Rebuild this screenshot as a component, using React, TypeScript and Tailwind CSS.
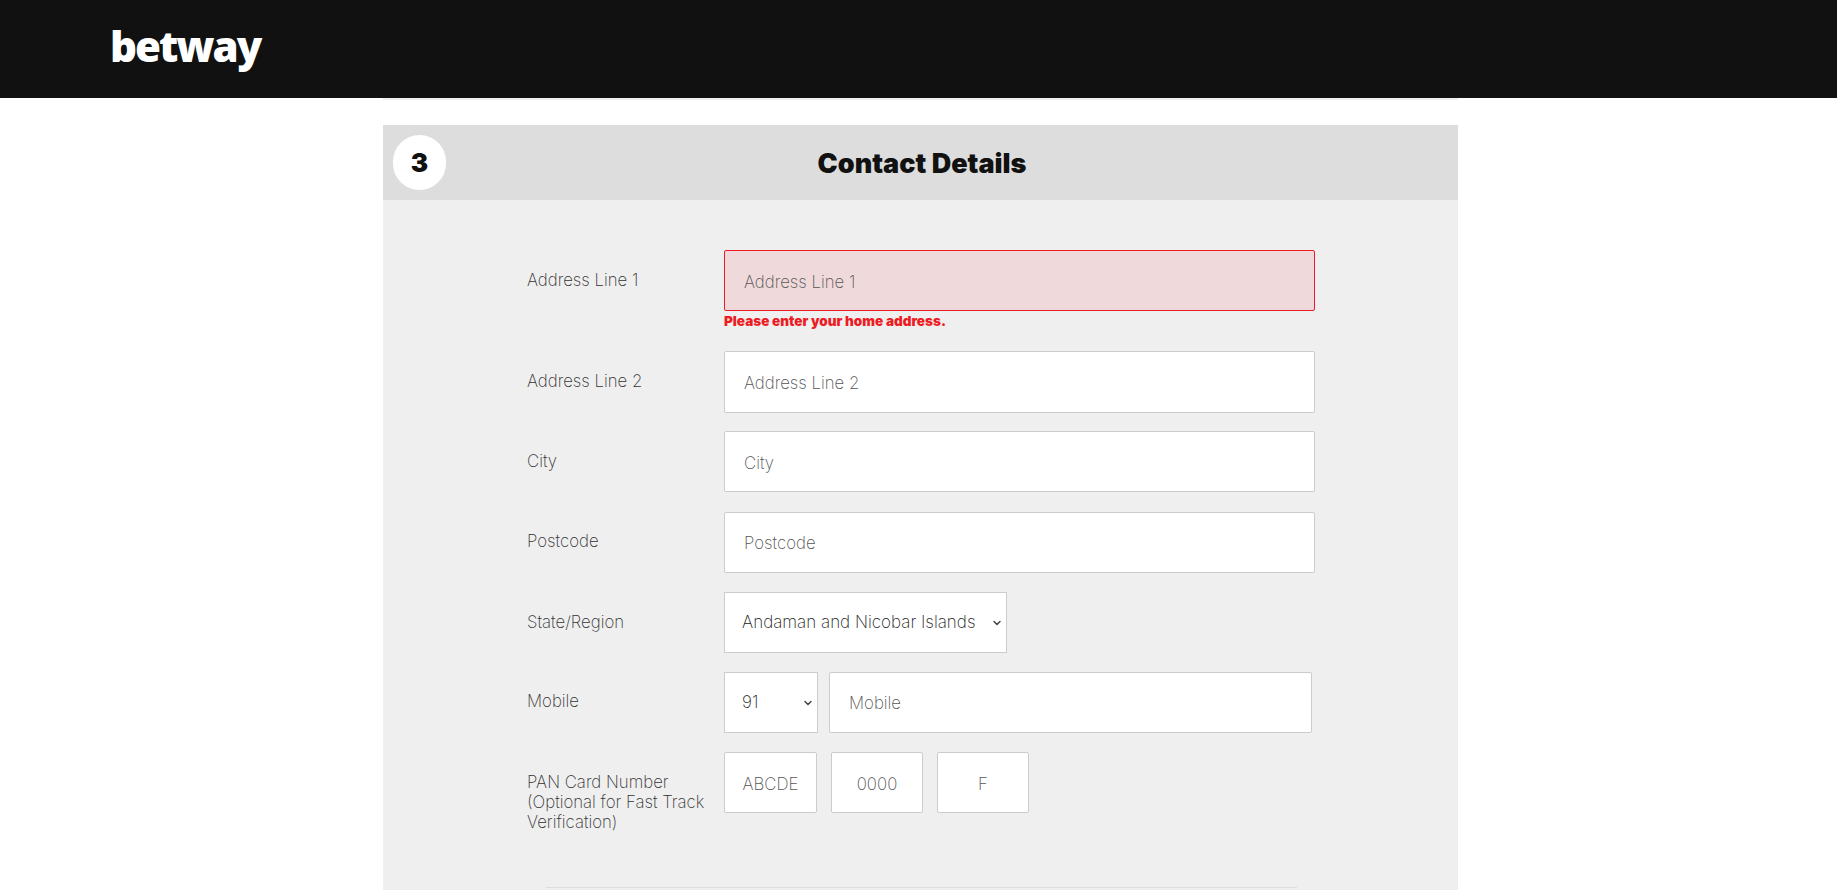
import React from 'react';
import { ChevronDown } from 'lucide-react';

const labelCls = "w-[197px] shrink-0 text-[16.8px] leading-[20px] font-[250] text-[#333]";
const inputCls = "h-[61px] bg-white border border-[#ccc] rounded-[2px] px-[19px] pt-[2px] text-[16.8px] font-[250] text-[#333] placeholder:text-[#555] outline-none";

function Row({ label, children, className, labelTop }: { label: string; children: React.ReactNode; className?: string; labelTop?: string }) {
  return (
    <div className={"flex " + (className || "")}>
      <div className={labelCls + " " + (labelTop || "pt-[20px]")}>{label}</div>
      {children}
    </div>
  );
}

function SelectBox({ value, width }: { value: string; width: string }) {
  return (
    <div className={"relative flex h-[61px] shrink-0 items-center border border-[#ccc] bg-white pl-[17px] text-[17px] font-[250] text-[#222] " + width}>
      {value}
      <ChevronDown className="absolute right-[3px] top-[24px] h-[12px] w-[12px] text-[#444]" strokeWidth={3} />
    </div>
  );
}

export default function App() {
  return (
    <div className="h-screen overflow-hidden bg-white font-['Inter',sans-serif]">
      {/* Top bar */}
      <header className="flex h-[98px] items-start bg-[#111] pl-[110px] pt-[21px]">
        <span className="font-['Open_Sans',sans-serif] text-[42px] leading-[50px] font-extrabold tracking-[-2px] text-white">betway</span>
      </header>
      <div className="ml-[383px] h-[2px] w-[1075px] bg-[#efefef]" />

      <main className="ml-[383px] mt-[25px] h-[780px] w-[1075px] bg-[#efefef]">
        {/* Section heading */}
        <div className="relative flex h-[75px] items-center justify-center bg-[#ddd]">
          <div className="absolute left-[10px] top-[10px] flex h-[55px] w-[53px] items-center justify-center rounded-full bg-white text-[26px] font-black text-[#111]">3</div>
          <h2 className="pl-[3px] pt-[3px] text-[27px] font-black text-[#111]">Contact Details</h2>
        </div>

        <form className="pl-[144px] pt-[50px]">
          <Row label="Address Line 1">
            <div className="w-[591px]">
              <input className="h-[61px] w-full rounded-[2px] border border-[#ed1c24] bg-[#f0d9db] px-[19px] pt-[2px] text-[16.8px] font-[250] placeholder:text-[#555] outline-none" placeholder="Address Line 1" />
              <p className="mt-[2px] text-[13.5px] leading-[16px] font-black text-[#ed1c24]">Please enter your home address.</p>
            </div>
          </Row>
          <Row label="Address Line 2" className="mt-[22px]">
            <input className={inputCls + " h-[62px] w-[591px]"} placeholder="Address Line 2" />
          </Row>
          <Row label="City" className="mt-[18px]">
            <input className={inputCls + " w-[591px]"} placeholder="City" />
          </Row>
          <Row label="Postcode" className="mt-[20px]" labelTop="pt-[19px]">
            <input className={inputCls + " w-[591px] !pt-[1px]"} placeholder="Postcode" />
          </Row>
          <Row label="State/Region" className="mt-[19px]">
            <SelectBox value="Andaman and Nicobar Islands" width="w-[283px]" />
          </Row>
          <Row label="Mobile" className="mt-[19px]" labelTop="pt-[19px]">
            <div className="flex gap-[11px]">
              <SelectBox value="91" width="w-[94px]" />
              <input className={inputCls + " w-[483px] !pt-[1px]"} placeholder="Mobile" />
            </div>
          </Row>
          <Row label="PAN Card Number (Optional for Fast Track Verification)" className="mt-[19px]">
            <div className="flex gap-[14px]">
              <input className={inputCls + " w-[93px] !px-0 text-center"} placeholder="ABCDE" />
              <input className={inputCls + " w-[92px] !px-0 text-center"} placeholder="0000" />
              <input className={inputCls + " w-[92px] !px-0 text-center"} placeholder="F" />
            </div>
          </Row>
          <div className="ml-[19px] mt-[55px] h-px w-[751px] bg-[#ddd]" />
        </form>
      </main>
    </div>
  );
}
